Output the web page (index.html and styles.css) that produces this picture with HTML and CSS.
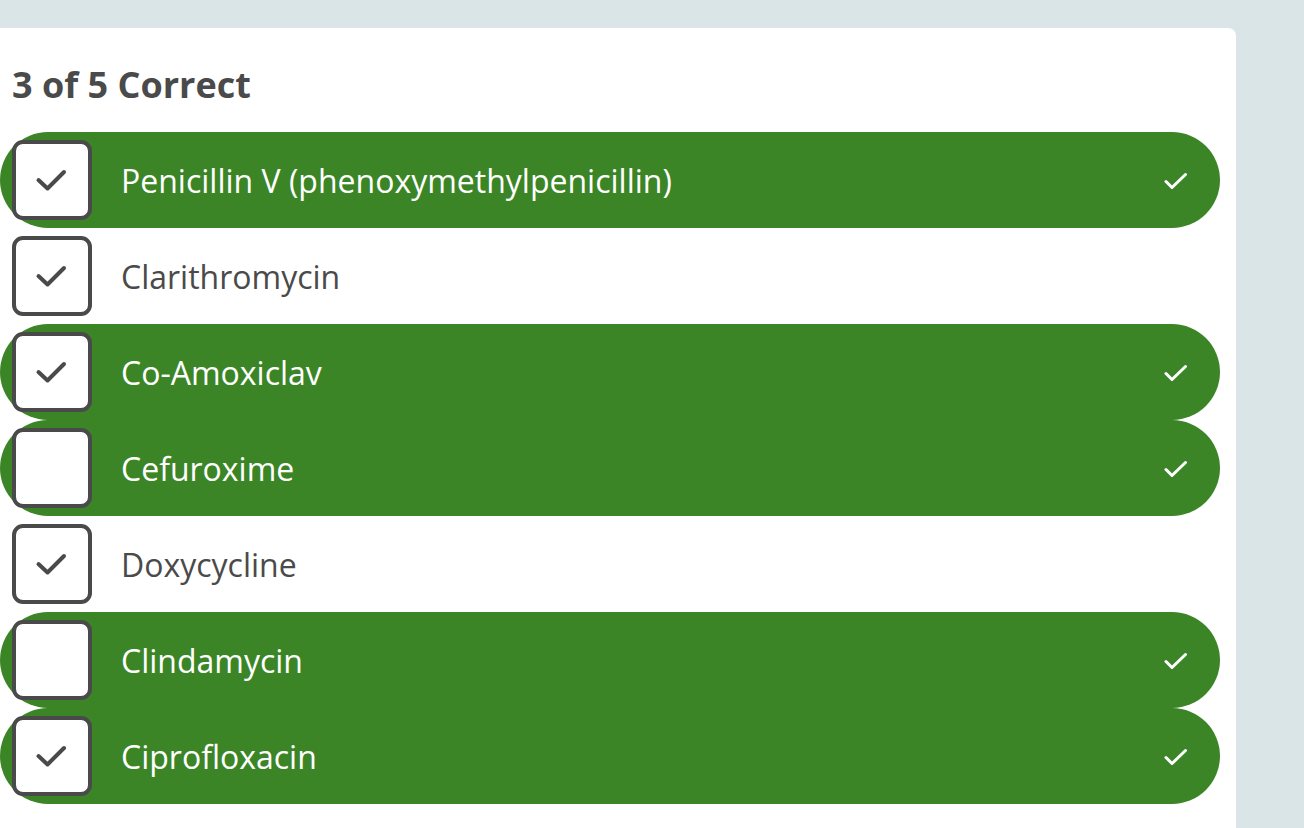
FILE: index.html
```html
<!DOCTYPE html>
<html>
<head>
<meta charset="utf-8">
<link rel="stylesheet" href="styles.css">
</head>
<body>
<div class="card">
  <h2 class="title">3 of 5 Correct</h2>
  <ul class="options">
    <li class="option correct">
      <span class="box"><svg viewBox="0 0 72 72" class="tick"><path d="M22.5 36 L31.5 44.5 L48 28"/></svg></span>
      <span class="label">Penicillin V (phenoxymethylpenicillin)</span>
      <svg viewBox="0 0 24 24" class="mark"><path d="M2 13.5 L8 19.5 L21.5 6.5"/></svg>
    </li>
    <li class="option">
      <span class="box"><svg viewBox="0 0 72 72" class="tick"><path d="M22.5 36 L31.5 44.5 L48 28"/></svg></span>
      <span class="label">Clarithromycin</span>
    </li>
    <li class="option correct">
      <span class="box"><svg viewBox="0 0 72 72" class="tick"><path d="M22.5 36 L31.5 44.5 L48 28"/></svg></span>
      <span class="label">Co-Amoxiclav</span>
      <svg viewBox="0 0 24 24" class="mark"><path d="M2 13.5 L8 19.5 L21.5 6.5"/></svg>
    </li>
    <li class="option correct">
      <span class="box"></span>
      <span class="label">Cefuroxime</span>
      <svg viewBox="0 0 24 24" class="mark"><path d="M2 13.5 L8 19.5 L21.5 6.5"/></svg>
    </li>
    <li class="option">
      <span class="box"><svg viewBox="0 0 72 72" class="tick"><path d="M22.5 36 L31.5 44.5 L48 28"/></svg></span>
      <span class="label">Doxycycline</span>
    </li>
    <li class="option correct">
      <span class="box"></span>
      <span class="label">Clindamycin</span>
      <svg viewBox="0 0 24 24" class="mark"><path d="M2 13.5 L8 19.5 L21.5 6.5"/></svg>
    </li>
    <li class="option correct">
      <span class="box"><svg viewBox="0 0 72 72" class="tick"><path d="M22.5 36 L31.5 44.5 L48 28"/></svg></span>
      <span class="label">Ciprofloxacin</span>
      <svg viewBox="0 0 24 24" class="mark"><path d="M2 13.5 L8 19.5 L21.5 6.5"/></svg>
    </li>
  </ul>
</div>
</body>
</html>
```

FILE: styles.css
```css
html, body {
  margin: 0;
  padding: 0;
  background: #dae5e8;
  font-family: "Open Sans", "Liberation Sans", sans-serif;
  color: #4a4a4a;
}
.card {
  margin-top: 28px;
  width: 1220px;
  padding: 0 16px 40px 0;
  background: #ffffff;
  border-radius: 0 8px 0 0;
}
.title {
  margin: 0;
  padding: 32px 0 0 12px;
  height: 72px;
  box-sizing: content-box;
  font-size: 36px;
  line-height: 50px;
  font-weight: 700;
  color: #4a4a4a;
}
.options {
  list-style: none;
  margin: 0;
  padding: 0;
}
.option {
  display: flex;
  align-items: center;
  height: 96px;
  border-radius: 48px;
  padding-left: 12px;
}
.option.correct {
  background: #3b8526;
  color: #ffffff;
}
.box {
  width: 80px;
  height: 80px;
  box-sizing: border-box;
  border: 4px solid #4a4a4a;
  border-radius: 11px;
  background: #ffffff;
  flex: none;
  display: flex;
}
.tick {
  width: 72px;
  height: 72px;
}
.tick path, .mark path {
  fill: none;
  stroke-linecap: round;
  stroke-linejoin: round;
}
.tick path {
  stroke: #4a4a4a;
  stroke-width: 4;
}
.label {
  margin-left: 29px;
  font-size: 32px;
  flex: 1;
}
.mark {
  width: 24px;
  height: 24px;
  margin-right: 32px;
  flex: none;
}
.mark path {
  stroke: #ffffff;
  stroke-width: 3;
}
```
